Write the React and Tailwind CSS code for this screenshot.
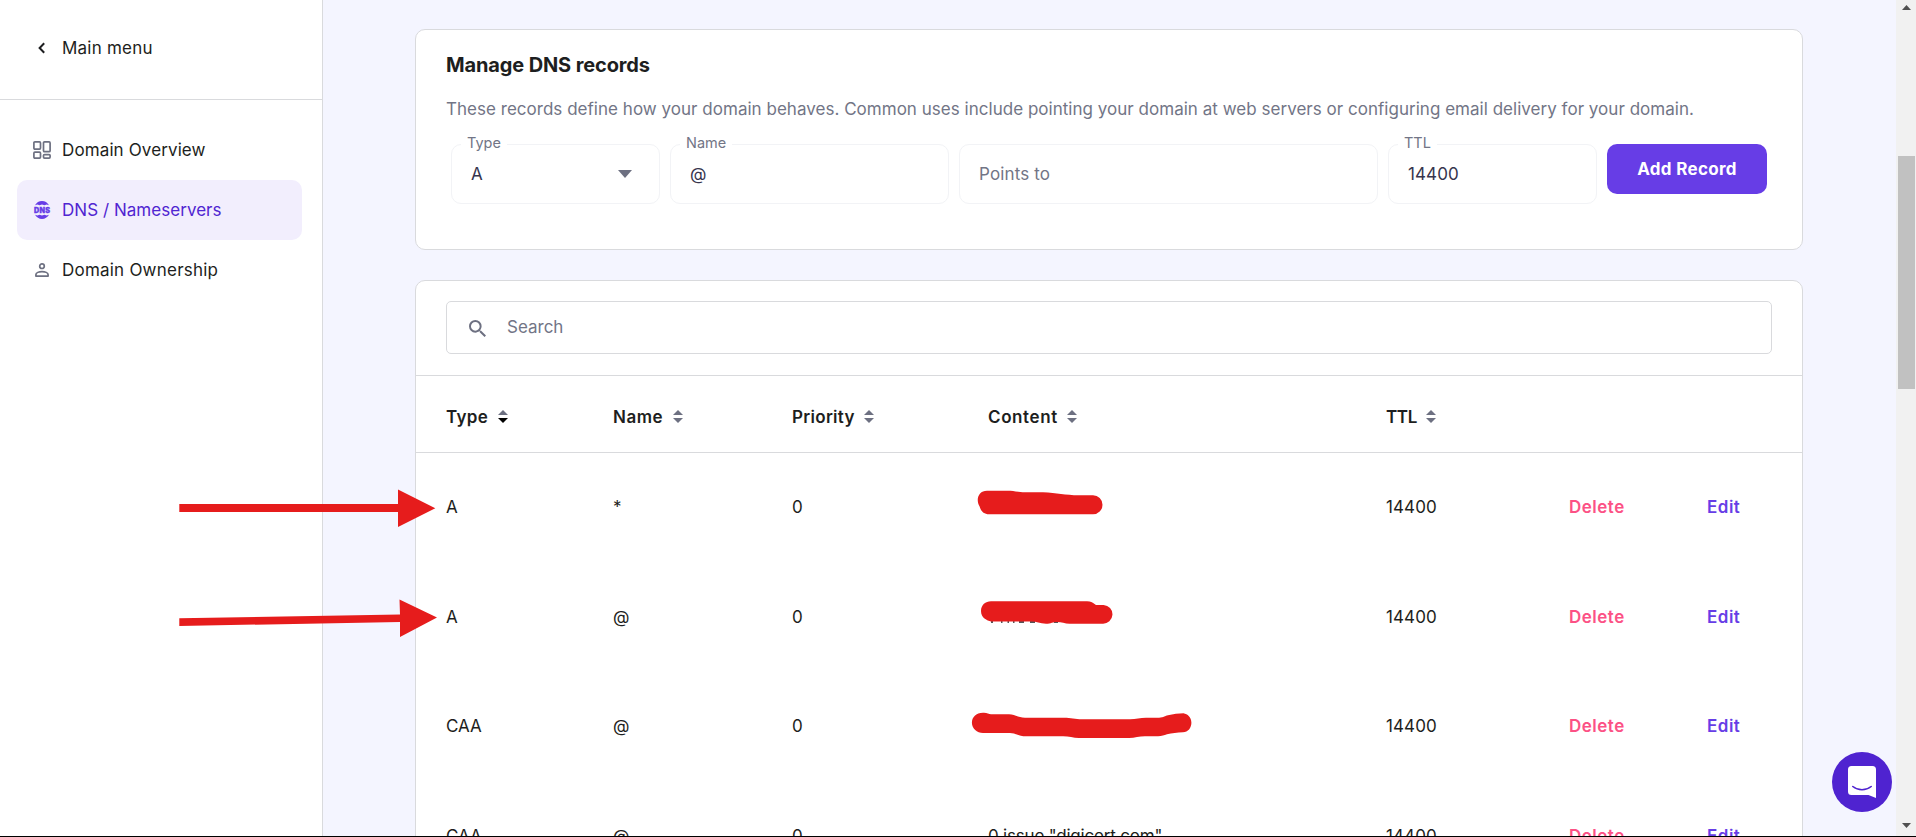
const SANS = "font-['Inter',sans-serif]";

function SortIcon({ active }) {
  return (
    <svg className="h-[13px] w-[10px] shrink-0" viewBox="0 0 10 13">
      <path d="M0 5h10L5 0z" fill="#6d7081" />
      <path d="M0 8h10l-5 5z" fill={active ? '#000' : '#6d7081'} />
    </svg>
  );
}

function NavItem({ icon, label, track, active }) {
  return (
    <a
      className={
        'flex h-15 items-center rounded-[10px] pl-4 text-[17px] leading-6 ' +
        (active ? 'bg-[#f2eefd] text-[#5025d1]' : 'text-[#1d1e20]')
      }
    >
      <span className="flex w-[18px] justify-center">{icon}</span>
      <span className={'ml-[11px] whitespace-nowrap ' + track}>{label}</span>
    </a>
  );
}

function Sidebar() {
  return (
    <aside className="w-[323px] shrink-0 border-r border-[#d9dadd] bg-white">
      <div className="flex h-[100px] items-start border-b border-[#d9dadd] pl-[38px] pt-9">
        <svg className="mt-1.5 h-3 w-[7px]" viewBox="0 0 7 12" fill="none" stroke="#1d1e20" strokeWidth="2">
          <path d="M6.2 1.2 1.6 6l4.600 4.800" />
        </svg>
        <span className="ml-[17px] text-[17px] leading-6 tracking-[0.22px] text-[#1d1e20]">Main menu</span>
      </div>
      <nav className="pl-[17px] pr-5 pt-5">
        <NavItem
          label="Domain Overview"
          track="tracking-[0.12px]"
          icon={
            <svg className="h-[18px] w-[18px]" viewBox="0 0 18 18" fill="none" stroke="#6d7081" strokeWidth="1.7">
              <rect x="0.9" y="0.9" width="6.6" height="7.2" rx="1" />
              <rect x="10.5" y="0.9" width="6.6" height="9.8" rx="1" />
              <rect x="0.9" y="11.2" width="6.6" height="5.9" rx="1" />
              <rect x="10.5" y="13.6" width="6.6" height="3.5" rx="1" />
            </svg>
          }
        />
        <NavItem
          active
          label="DNS / Nameservers"
          track="tracking-[0.04px]"
          icon={
            <svg className="h-[18px] w-[18px]" viewBox="0 0 18 18">
              <path d="M2 4.200C3.600 1.500 6 0 9 0s5.400 1.500 7 4.200l-2.300-.8-2.300.8L9 3.400l-2.400.8-2.300-.8z" fill="#673de6" />
              <path d="M2 13.800C3.600 16.500 6 18 9 18s5.400-1.500 7-4.200l-2.300.8-2.300-.8-2.400.8-2.400-.8-2.300.8z" fill="#673de6" />
              <text x="1" y="11.600" fontSize="7.200" fontWeight="900" textLength="16" stroke="#673de6" strokeWidth="0.300" fill="#673de6">DNS</text>
            </svg>
          }
        />
        <NavItem
          label="Domain Ownership"
          track="tracking-[0.22px]"
          icon={
            <svg className="h-[14px] w-[14px]" viewBox="0 0 14 14" fill="none" stroke="#6d7081" strokeWidth="1.7">
              <circle cx="7" cy="3.200" r="2.300" />
              <path d="M.9 13.100v-1.300c0-1.800 3-3.100 6.100-3.100s6.100 1.300 6.100 3.100v1.300z" strokeLinejoin="round" />
            </svg>
          }
        />
      </nav>
    </aside>
  );
}

function Field({ label, width, children }) {
  return (
    <div className={'relative flex h-15 items-center rounded-[10px] border border-[#f2f3f6] pl-[19px] text-[17px] leading-6 text-[#36344d] ' + width}>
      {label && (
        <span className="absolute -top-3 left-[9px] bg-white px-1.5 text-[14.5px] leading-5 text-[#727586]">{label}</span>
      )}
      {children}
    </div>
  );
}

function ManageCard() {
  return (
    <section className="h-[221px] rounded-[10px] border border-[#d9dadd] bg-white pl-[30px]">
      <h2 className="pt-[21px] text-[20px] font-bold leading-[28px] tracking-[-0.13px] text-[#1d1e20]">Manage DNS records</h2>
      <p className="mt-[18px] whitespace-nowrap text-[17px] leading-6 tracking-[0.025px] text-[#727586]">
        These records define how your domain behaves. Common uses include pointing your domain at web servers or
        configuring email delivery for your domain.
      </p>
      <div className="ml-[5px] mt-[23px] flex items-start">
        <Field label="Type" width="w-[209px]">
          <span>A</span>
          <svg className="ml-[135px] h-2 w-[14px]" viewBox="0 0 14 8">
            <path d="M0 0h14L7 8z" fill="#6d7081" />
          </svg>
        </Field>
        <Field label="Name" width="ml-2.5 w-[279px]">
          <span>@</span>
        </Field>
        <Field width="ml-2.5 w-[419px]">
          <span className="tracking-[0.15px] text-[#727586]">Points to</span>
        </Field>
        <Field label="TTL" width="ml-2.5 w-[209px]">
          <span className="tracking-[0.1px]">14400</span>
        </Field>
        <button className="ml-2.5 h-[50px] w-40 rounded-[10px] bg-[#673de6] text-[17px] font-bold leading-6 tracking-[0.3px] text-white">
          Add Record
        </button>
      </div>
    </section>
  );
}

const COLS = 'grid grid-cols-[167px_179px_196px_398px_183px_138px_1fr] pl-[30px]';

const HEADERS = [
  ['Type', 'tracking-[0.3px]', true],
  ['Name', 'tracking-[0.5px]', false],
  ['Priority', 'tracking-[0.3px]', false],
  ['Content', 'tracking-[0.6px]', false],
  ['TTL', 'tracking-[-0.4px]', false],
];

const ROWS = [
  { type: 'A', name: '*', content: '' },
  { type: 'A', name: '@', content: '' },
  { type: 'CAA', name: '@', content: '' },
  { type: 'CAA', name: '@', content: '0 issue "digicert.com"' },
];

function RecordsCard() {
  return (
    <section className="mt-[30px] h-[700px] rounded-t-[10px] border border-[#d9dadd] bg-white">
      <div className="h-[95px] border-b border-[#d9dadd] pl-[30px] pr-[30px] pt-5">
        <div className="flex h-[53px] items-center rounded-[5px] border border-[#d9dadd] pl-[22px]">
          <svg className="mt-0.5 h-[17px] w-[17px]" viewBox="3 3 17.5 17.5" fill="#6d7081">
            <path d="M15.500 14h-.79l-.28-.27A6.471 6.471 0 0 0 16 9.500 6.500 6.500 0 1 0 9.500 16c1.610 0 3.090-.59 4.230-1.570l.27.28v.79l5 4.990L20.490 19l-4.990-5zm-6 0C7.010 14 5 11.990 5 9.500S7.010 5 9.500 5 14 7.010 14 9.500 11.990 14 9.500 14z" />
          </svg>
          <span className="-mt-px ml-[21px] text-[17px] leading-6 text-[#727586]">Search</span>
        </div>
      </div>
      <div className={COLS + ' h-[77px] items-center border-b border-[#d9dadd] pt-[5px] text-[17px] font-semibold leading-6 text-[#1d1e20]'}>
        {HEADERS.map(([label, track, active]) => (
          <div key={label} className="flex items-center gap-[9.5px]">
            <span className={track}>{label}</span>
            <SortIcon active={active} />
          </div>
        ))}
      </div>
      {ROWS.map((row, i) => (
        <div key={i} className={COLS + ' h-[109.700px] items-center pb-[1.5px] text-[17px] leading-6 text-[#1d1e20]'}>
          <span>{row.type}</span>
          <span>{row.name}</span>
          <span>0</span>
          <span className="whitespace-nowrap tracking-[-0.2px]">{row.content}</span>
          <span className="tracking-[0.1px]">14400</span>
          <a className="font-semibold tracking-[0.5px] text-[#fc5185]">Delete</a>
          <a className="font-semibold tracking-[0.5px] text-[#673de6]">Edit</a>
        </div>
      ))}
    </section>
  );
}

function Scrollbar() {
  return (
    <div className="flex w-5 shrink-0 flex-col items-center justify-between bg-[#f1f1f1] pb-2 pt-[5px]">
      <svg className="h-[5px] w-[9px]" viewBox="0 0 9 5">
        <path d="M0 5h9L4.500 0z" fill="#505050" />
      </svg>
      <div className="mb-auto ml-px mt-[146px] h-[233px] w-[17px] bg-[#c1c1c1]" />
      <svg className="h-[5px] w-[9px]" viewBox="0 0 9 5">
        <path d="M0 0h9L4.500 5z" fill="#505050" />
      </svg>
    </div>
  );
}

/* Freehand red marks drawn over the page. */
function Annotations() {
  return (
    <svg className="pointer-events-none absolute left-0 top-0 h-[837px] w-[1916px]" viewBox="0 0 1916 837" fill="#e61c1c">
      <path d="M179.300 504H398v-14.500l37.300 18.800L398 527v-15H179.300z" />
      <path d="M179.300 618.300 400 614.500l-.5-15 37.500 18-37 19.500v-15L179.300 626z" />
      <path d="M987 490.700h20c8 0 12 1.600 18 1.600h18c14 .5 22 3 36 3h14a9.500 9.500 0 0 1 0 19H989c-5 0-8-3-9.500-8-4-7-1-15.600 7.500-15.600z" />
      <path d="M991 622h2m8 0h1.500m5 0h1.500m4 0h1.500m4.500 0h5m6 0h5m19 0h4" stroke="#1d1e20" strokeWidth="1.600" fill="none" />
      <path d="M991 601.300h96c4 0 6 1.500 9 3.700h7.600a9.300 9.300 0 0 1-1 18.700h-33c-5 0-8-1.700-12.600-1.700-4 0-6 1.700-11 1.700-6 0-10-2.200-14-2.200h-41c-4-1-10-3.500-10-10.500 0-6 4.500-9.700 10-9.700z" />
      <path d="M984 712.700c3 0 5 1.600 7 1.600h18c6 0 9 3.400 16 3.400h39c7 0 11 1.600 18 1.600h48c6 0 10-1.600 16-1.600h13c5-.2 6-2 9-2.400 5-1.300 11-2 15.500-2 4 .7 7.900 4 7.900 9.500 0 5-3.400 9.500-8.400 9.500-6 .2-11 1-16 2-3 .8-5 2-9 2h-13c-6 0-10 1.700-16 1.700h-50c-6 0-10-1.700-16-1.700h-37c-6 0-11-3.300-16-3.300h-27c-6 0-11.100-4.500-11.100-10.200s4.100-10.100 11.100-10.100z" />
    </svg>
  );
}

function ChatLauncher() {
  return (
    <button className="absolute left-[1832px] top-[752px] flex h-15 w-15 items-center justify-center rounded-full bg-[#4f23d0]">
      <svg className="h-8 w-7" viewBox="0 0 28 32">
        <path d="M3.500 0h21A3.500 3.500 0 0 1 28 3.500V32l-7.500-3h-17A3.500 3.500 0 0 1 0 25.500v-22A3.500 3.500 0 0 1 3.500 0z" fill="#fff" />
        <path d="M4.800 20.500c5.400 4.400 13 4.400 18.400 0" fill="none" stroke="#4f23d0" strokeWidth="1.600" strokeLinecap="round" />
      </svg>
    </button>
  );
}

export default function App() {
  return (
    <div className={'relative h-[837px] w-[1916px] overflow-hidden border-b border-black bg-[#f4f5ff] antialiased ' + SANS}>
      <div className="flex h-full">
        <Sidebar />
        <main className="flex-1 overflow-hidden pl-[92px] pr-[93px] pt-[29px]">
          <ManageCard />
          <RecordsCard />
        </main>
        <Scrollbar />
      </div>
      <Annotations />
      <ChatLauncher />
    </div>
  );
}
